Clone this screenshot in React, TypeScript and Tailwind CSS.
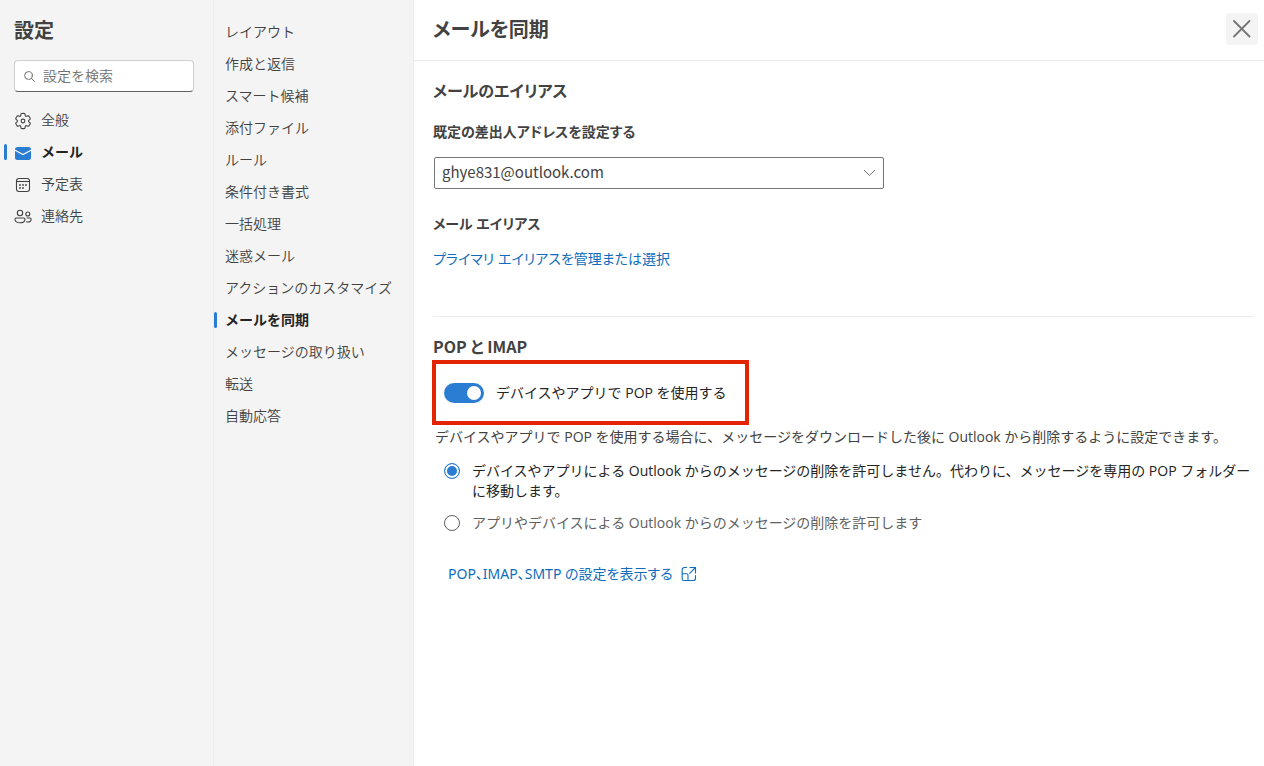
import { useState } from "react";

function GearIcon() {
  return (
    <svg width="18" height="18" viewBox="0 0 20 20" fill="none" stroke="currentColor" strokeWidth="1.2" strokeLinejoin="round" aria-hidden="true">
      <path d="M1.91 7.38A8.5 8.5 0 0 1 3.7 4.3a.5.5 0 0 1 .54-.13l1.92.68a1 1 0 0 0 1.32-.76l.36-2a.5.5 0 0 1 .4-.4 8.53 8.53 0 0 1 3.55 0c.2.04.35.2.38.4l.37 2a1 1 0 0 0 1.32.76l1.92-.68a.5.5 0 0 1 .54.13 8.5 8.5 0 0 1 1.78 3.08c.06.2 0 .4-.15.54l-1.56 1.32a1 1 0 0 0 0 1.52l1.56 1.32a.5.5 0 0 1 .15.54 8.5 8.5 0 0 1-1.78 3.08.5.5 0 0 1-.54.13l-1.92-.68a1 1 0 0 0-1.32.76l-.37 2a.5.5 0 0 1-.38.4 8.53 8.53 0 0 1-3.56 0 .5.5 0 0 1-.39-.4l-.36-2a1 1 0 0 0-1.32-.76l-1.92.68a.5.5 0 0 1-.54-.13 8.5 8.5 0 0 1-1.78-3.08.5.5 0 0 1 .15-.54l1.56-1.32a1 1 0 0 0 0-1.52L2.06 7.92a.5.5 0 0 1-.15-.54Z" />
      <circle cx="10" cy="10" r="2.1" />
    </svg>
  );
}

function MailIcon() {
  return (
    <svg width="18" height="18" viewBox="0 0 18 18" aria-hidden="true">
      <rect x="1" y="3" width="16" height="13" rx="2.5" fill="#2b7cd3" />
      <path d="M1 6.2 9 10.6l8-4.4" fill="none" stroke="#fff" strokeWidth="1.1" />
    </svg>
  );
}

function CalendarIcon() {
  return (
    <svg width="18" height="18" viewBox="0 0 18 18" fill="none" stroke="currentColor" strokeWidth="1.1" aria-hidden="true">
      <rect x="2.5" y="2.5" width="13" height="13" rx="2.5" />
      <path d="M2.5 5.5h13" />
      <g fill="currentColor" stroke="none">
        <circle cx="6" cy="9" r=".9" />
        <circle cx="9" cy="9" r=".9" />
        <circle cx="12" cy="9" r=".9" />
        <circle cx="6" cy="12" r=".9" />
        <circle cx="9" cy="12" r=".9" />
      </g>
    </svg>
  );
}

function PeopleIcon() {
  return (
    <svg width="18" height="18" viewBox="0 0 18 18" fill="none" stroke="currentColor" strokeWidth="1.1" aria-hidden="true">
      <circle cx="6" cy="5" r="2.7" />
      <circle cx="13.8" cy="6" r="2" />
      <path d="M2.2 10h7.600c.7 0 1.200.5 1.200 1.200 0 2.200-2 3.600-5 3.600s-5-1.400-5-3.600c0-.7.5-1.200 1.200-1.200Z" />
      <path d="M12.600 10h3.300c.7 0 1.200.5 1.200 1.200 0 1.800-1.200 2.800-3.200 2.800-.6 0-1.200-.1-1.700-.3" />
    </svg>
  );
}

const sections = [
  { label: "全般", Icon: GearIcon },
  { label: "メール", Icon: MailIcon },
  { label: "予定表", Icon: CalendarIcon },
  { label: "連絡先", Icon: PeopleIcon },
];

const pages = [
  "レイアウト",
  "作成と返信",
  "スマート候補",
  "添付ファイル",
  "ルール",
  "条件付き書式",
  "一括処理",
  "迷惑メール",
  "アクションのカスタマイズ",
  "メールを同期",
  "メッセージの取り扱い",
  "転送",
  "自動応答",
];

function Marker() {
  return <span className="absolute left-0 h-4 w-[3px] rounded-sm bg-[#2b7cd3]" />;
}

function Radio({ label, checked, onChange, tone }: { label: string; checked: boolean; onChange: () => void; tone: string }) {
  return (
    <label className={`flex items-start gap-3 leading-5 ${tone}`}>
      <input
        type="radio"
        name="pop-delete"
        checked={checked}
        onChange={onChange}
        className="mt-0.5 size-4 shrink-0 appearance-none rounded-full border border-[#616161] bg-white checked:border-[#2b7cd3] checked:bg-[#2b7cd3] checked:shadow-[inset_0_0_0_2px_white]"
      />
      <span>{label}</span>
    </label>
  );
}

export default function App() {
  const [pop, setPop] = useState(true);
  const [keep, setKeep] = useState(true);

  return (
    <div className="flex min-h-screen bg-white font-['Open_Sans','Noto_Sans_CJK_JP',sans-serif] text-sm text-[#424242]">
      <aside className="w-[213px] shrink-0 bg-[#f4f4f4] pt-[17px] font-[350]">
        <h1 className="px-3.5 text-xl leading-7 font-bold">設定</h1>
        <label className="mt-[15px] mr-[19px] ml-3.5 flex h-8 items-center gap-2 rounded border border-[#d1d1d1] border-b-[#616161] bg-white px-[9px]">
          <svg width="11" height="11" viewBox="0 0 11 11" fill="none" stroke="#707070" strokeLinecap="round" aria-hidden="true" className="shrink-0">
            <circle cx="4.5" cy="4.5" r="3.9" />
            <path d="m7.4 7.4 3.1 3.1" />
          </svg>
          <input type="search" aria-label="設定を検索" placeholder="設定を検索" className="w-full min-w-0 bg-transparent outline-none placeholder:text-[#707070]" />
        </label>
        <nav className="mt-3 pl-1">
          {sections.map(({ label, Icon }) => {
            const active = label === "メール";
            return (
              <a key={label} href="#" className={`relative flex h-8 items-center gap-[9px] pl-2.5 ${active ? "font-bold text-[#242424]" : ""}`}>
                {active && <Marker />}
                <span className="pt-0.5">
                  <Icon />
                </span>
                <span>{label}</span>
              </a>
            );
          })}
        </nav>
      </aside>

      <nav className="w-[201px] shrink-0 border-x border-[#ececec] bg-[#f4f4f4] pt-4 font-[350]">
        {pages.map((label) => {
          const active = label === "メールを同期";
          return (
            <a key={label} href="#" className={`relative flex h-8 items-center pb-px pl-[11px] ${active ? "font-bold text-[#242424]" : ""}`}>
              {active && <Marker />}
              {label}
            </a>
          );
        })}
      </nav>

      <main className="min-w-0 flex-1">
        <header className="flex h-[61px] items-center justify-between border-b border-[#ececec] pr-1.5 pl-[19px]">
          <h2 className="text-xl font-bold [font-feature-settings:'palt']">メールを同期</h2>
          <button type="button" aria-label="閉じる" className="mb-0.5 grid size-8 place-items-center rounded bg-[#f4f4f4] text-[#757575]">
            <svg width="18" height="18" viewBox="0 0 18 18" fill="none" stroke="currentColor" strokeWidth="1.8" strokeLinecap="round" aria-hidden="true">
              <path d="m1 1 15.500 15.500m0-15.500-15.500 15.500" />
            </svg>
          </button>
        </header>

        <div className="pr-2.5 pl-[19px]">
          <section className="border-b border-[#ececec] pt-[18px] pb-[47px] [font-feature-settings:'palt']">
            <h3 className="text-base leading-6 font-bold">メールのエイリアス</h3>
            <label htmlFor="from" className="mt-[19px] block leading-5 font-bold">
              既定の差出人アドレスを設定する
            </label>
            <div className="relative mt-[15px] ml-px max-w-[450px]">
              <select id="from" className="block h-8 w-full appearance-none rounded-xs border border-[#757575] bg-white px-[7px] pb-0.5 font-['Noto_Sans_CJK_JP',sans-serif] text-[15px]">
                <option>ghye831@outlook.com</option>
              </select>
              <svg className="pointer-events-none absolute top-3 right-2" width="13" height="8" viewBox="0 0 13 8" fill="none" stroke="#757575" aria-hidden="true">
                <path d="m1 1 5.500 5.500L12 1" />
              </svg>
            </div>
            <h4 className="mt-[25px] leading-5 font-bold">メール エイリアス</h4>
            <a href="#" className="mt-[15px] block leading-5 text-[#0f6cbd]">
              プライマリ エイリアスを管理または選択
            </a>
          </section>

          <section className="pt-[17px]">
            <h3 className="font-['Noto_Sans_CJK_JP',sans-serif] text-base leading-6 font-bold [font-feature-settings:'palt']">POP と IMAP</h3>
            <div className="mt-0.5 -ml-px flex h-[65px] w-fit items-center border-4 border-[#e32400] pr-[18px] pl-2">
              <label className="flex items-center gap-3 text-[#242424]">
                <input
                  type="checkbox"
                  role="switch"
                  checked={pop}
                  onChange={() => setPop(!pop)}
                  className="flex h-5 w-10 shrink-0 appearance-none items-center rounded-full bg-[#2b7cd3] px-[3px] before:size-3.5 before:rounded-full before:bg-white checked:justify-end"
                />
                デバイスやアプリで POP を使用する
              </label>
            </div>
            <p className="mt-0.5 pl-0.5 leading-5">
              デバイスやアプリで POP を使用する場合に、メッセージをダウンロードした後に Outlook から削除するように設定できます。
            </p>
            <div className="mt-3.5 flex flex-col gap-3 pl-[11px]">
              <Radio
                label="デバイスやアプリによる Outlook からのメッセージの削除を許可しません。代わりに、メッセージを専用の POP フォルダーに移動します。"
                checked={keep}
                onChange={() => setKeep(true)}
                tone="text-[#242424]"
              />
              <Radio
                label="アプリやデバイスによる Outlook からのメッセージの削除を許可します"
                checked={!keep}
                onChange={() => setKeep(false)}
                tone="text-[#616161]"
              />
            </div>
            <a href="#" className="mt-[31px] ml-[15px] flex w-fit items-center gap-2 font-['Noto_Sans','Noto_Sans_CJK_JP',sans-serif] leading-5 text-[#0f6cbd] [font-feature-settings:'palt']">
              POP、IMAP、SMTP の設定を表示する
              <svg width="16" height="16" viewBox="0 0 16 16" fill="none" stroke="currentColor" strokeWidth="1.1" strokeLinecap="round" strokeLinejoin="round" aria-hidden="true">
                <path d="M5.500 1.500H3.500a2.300 2.300 0 0 0-2.300 2.300v9.200c0 .9.600 1.500 1.500 1.500h9.500a2.300 2.300 0 0 0 2.300-2.300V9.500" />
                <path d="M1.200 7.800h4.300A1.500 1.500 0 0 1 7 9.300v5.200" />
                <path d="M9 1.500h5.500V7M14.500 1.500 8.700 7.300" />
              </svg>
            </a>
          </section>
        </div>
      </main>
    </div>
  );
}
